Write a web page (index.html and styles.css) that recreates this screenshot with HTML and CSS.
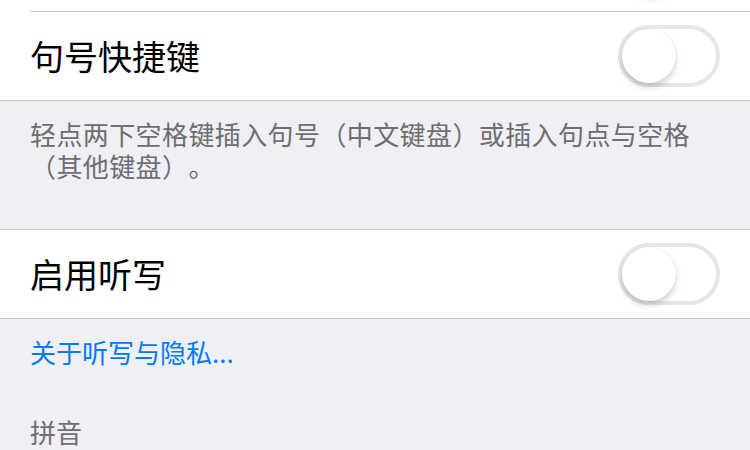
FILE: index.html
```html
<!DOCTYPE html>
<html lang="zh-CN">
<head>
    <meta charset="UTF-8">
    <meta name="viewport" content="width=device-width, initial-scale=1.0">
    <title>键盘</title>
    <link rel="stylesheet" href="styles.css">
</head>
<body>
    <div class="group group-first">
        <div class="cell">
            <div class="cell-body">
                <span class="label"></span>
                <span class="switch"><span class="knob"></span></span>
            </div>
        </div>
        <div class="cell">
            <div class="cell-body">
                <span class="label">句号快捷键</span>
                <span class="switch"><span class="knob"></span></span>
            </div>
        </div>
    </div>
    <p class="footer note">轻点两下空格键插入句号（中文键盘）或插入句点与空格<br>（其他键盘）。</p>

    <div class="group">
        <div class="cell">
            <div class="cell-body">
                <span class="label">启用听写</span>
                <span class="switch"><span class="knob"></span></span>
            </div>
        </div>
    </div>
    <p class="footer link">关于听写与隐私...</p>
    <p class="header">拼音</p>
</body>
</html>
```

FILE: styles.css
```css
body{
    margin: 0;
    background: #efeff4;
    font-family: "Noto Sans CJK SC", "Noto Sans", sans-serif;
    text-spacing-trim: space-all;
}
.group{
    background: #fff;
    border-top: 1px solid #c8c7cc;
    border-bottom: 1px solid #c8c7cc;
}
.group-first{
    border-top: none;
    margin-top: -77px;
}
.cell{
    padding-left: 30px;
}
.cell-body{
    display: flex;
    align-items: center;
    justify-content: space-between;
    height: 88px;
    padding-right: 30px;
    border-bottom: 1px solid #c8c7cc;
}
.cell:last-child .cell-body{
    border-bottom: none;
}
.label{
    font-size: 34px;
    line-height: 40px;
    color: #000;
}
.switch{
    box-sizing: border-box;
    display: flex;
    width: 102px;
    height: 62px;
    border: 4px solid #e5e5ea;
    border-radius: 31px;
    background: #fff;
}
.knob{
    width: 54px;
    height: 54px;
    border-radius: 50%;
    background: #fff;
    box-shadow: 0 4px 6px rgba(0,0,0,0.18),
    0 0 1px rgba(0,0,0,0.12);
}
.footer{
    margin: 0;
    padding: 17px 30px 47px 30px;
    font-size: 26px;
    line-height: 32px;
    color: #6d6d72;
}
.note{
    letter-spacing: 0.4px;
    padding-right: 20px;
}
.link{
    color: #007aff;
    padding-bottom: 48px;
}
.header{
    margin: 0;
    padding: 0 30px;
    font-size: 26px;
    line-height: 32px;
    color: #6d6d72;
}
```
